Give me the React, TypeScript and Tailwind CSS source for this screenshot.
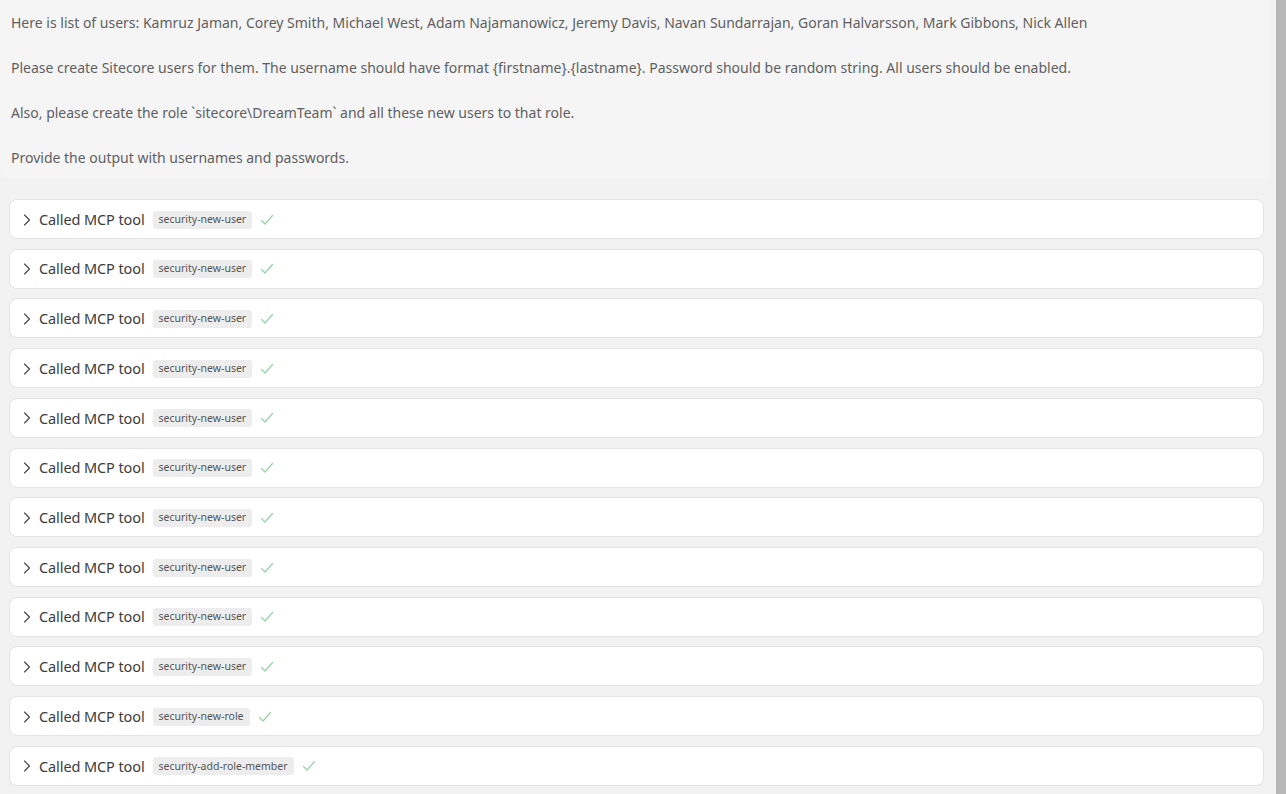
import React from "react";

const tools = [
  "security-new-user",
  "security-new-user",
  "security-new-user",
  "security-new-user",
  "security-new-user",
  "security-new-user",
  "security-new-user",
  "security-new-user",
  "security-new-user",
  "security-new-user",
  "security-new-role",
  "security-add-role-member",
];

function Chevron() {
  return (
    <svg width="10" height="14" viewBox="0 0 10 14" className="shrink-0">
      <path d="M2.5 2 L7.5 7 L2.5 12" fill="none" stroke="#444" strokeWidth="1.1" strokeLinecap="round" strokeLinejoin="round" />
    </svg>
  );
}

function Check() {
  return (
    <svg width="14" height="12" viewBox="0 0 14 12" className="shrink-0">
      <path d="M1.5 6.5 L5 10 L12.5 1.5" fill="none" stroke="#93d3a6" strokeWidth="1.2" strokeLinecap="round" strokeLinejoin="round" />
    </svg>
  );
}

export default function App() {
  return (
    <div
      className="w-[1286px] h-[794px] overflow-hidden bg-[#f2f2f2] flex"
      style={{ fontFamily: '"Noto Sans", "Open Sans", sans-serif' }}
    >
      <div className="flex-1 flex flex-col">
        <div className="w-[1270px] bg-[#f5f5f5] rounded-b-[8px] pl-[11px] pt-[12px] pb-[11px] text-[14px] text-[#5f5f5f] leading-[21px] flex flex-col gap-[24px]">
          <p>Here is list of users: Kamruz Jaman, Corey Smith, Michael West, Adam Najamanowicz, Jeremy Davis, Navan Sundarrajan, Goran Halvarsson, Mark Gibbons, Nick Allen</p>
          <p>Please create Sitecore users for them. The username should have format {"{firstname}.{lastname}"}. Password should be random string. All users should be enabled.</p>
          <p>Also, please create the role `sitecore\DreamTeam` and all these new users to that role.</p>
          <p>Provide the output with usernames and passwords.</p>
        </div>
        <div className="flex flex-col gap-[9.73px] pl-[9px] w-[1264px] mt-[20px]">
          {tools.map((t, i) => (
            <div
              key={i}
              className="h-[40px] bg-white border border-[#e3e3e3] rounded-[8px] flex items-center pl-[12px] pt-[1px] gap-[8px]"
            >
              <Chevron />
              <span className="text-[14.5px] text-[#3c3c3c] -ml-[1px] tracking-[-0.1px]">Called MCP tool</span>
              <span className="bg-[#ededed] text-[#555] text-[10.5px] rounded-[3px] px-[6px] h-[18px] flex items-center">{t}</span>
              <Check />
            </div>
          ))}
        </div>
      </div>
      <div className="w-[10px] h-full bg-[#b7b7b7]" />
    </div>
  );
}
